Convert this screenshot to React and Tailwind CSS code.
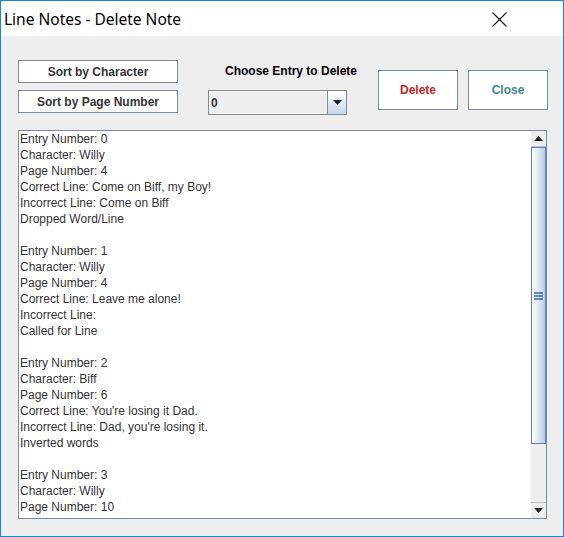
const entries = [
  ["Entry Number: 0", "Character: Willy", "Page Number: 4", "Correct Line: Come on Biff, my Boy!", "Incorrect Line: Come on Biff", "Dropped Word/Line"],
  ["Entry Number: 1", "Character: Willy", "Page Number: 4", "Correct Line: Leave me alone!", "Incorrect Line:", "Called for Line"],
  ["Entry Number: 2", "Character: Biff", "Page Number: 6", "Correct Line: You're losing it Dad.", "Incorrect Line: Dad, you're losing it.", "Inverted words"],
  ["Entry Number: 3", "Character: Willy", "Page Number: 10"],
];

const lines = entries.flatMap((e, i) => (i === 0 ? e : ["", ...e]));

const Arrow = ({ up }) => (
  <svg width="9" height="5" viewBox="0 0 9 5">
    <path d={up ? "M0 5 L4.5 0 L9 5 Z" : "M0 0 L9 0 L4.5 5 Z"} fill="#222" />
  </svg>
);

const App = () => {
  return (
    <div
      className="w-[564px] h-[537px] border border-[#1883d7] bg-[#eeeeee] flex flex-col overflow-hidden"
      style={{ fontFamily: '"Liberation Sans", Arial, sans-serif' }}
    >
      {/* title bar */}
      <div className="h-[35px] bg-white flex items-center justify-between shrink-0">
        <span
          className="pl-[3px] pt-[2px] text-[15.5px] text-black leading-none"
          style={{ fontFamily: '"Noto Sans", "Open Sans", sans-serif' }}
        >
          Line Notes - Delete Note
        </span>
        <svg width="15" height="15" viewBox="0 0 15 15" className="mr-[56px] mt-[2px]">
          <path d="M0.5 0.5 L14.5 14.5 M14.5 0.5 L0.5 14.5" stroke="#111" strokeWidth="1.1" />
        </svg>
      </div>

      <div className="flex flex-col px-[17px] pt-[24px]">
        {/* controls row */}
        <div className="flex items-start h-[70px]">
          <div className="w-[160px] shrink-0 flex flex-col gap-[7px]">
            <button className="h-[23px] bg-white border border-[#7a8a99] text-[12px] font-bold text-[#333333]">
              Sort by Character
            </button>
            <button className="h-[23px] bg-white border border-[#7a8a99] text-[12px] font-bold text-[#333333]">
              Sort by Page Number
            </button>
          </div>

          <div className="ml-[30px] w-[139px] shrink-0 flex flex-col">
            <div className="ml-[17px] h-[20px] mt-[1px] whitespace-nowrap text-[12px] font-bold text-black leading-[20px]">
              Choose Entry to Delete
            </div>
            <div className="mt-[9px] h-[25px] flex border border-[#7a8a99]">
              <div className="flex-1 border border-[#f8f8f8] bg-[#eeeeee] flex items-center pl-[1px] text-[12px] font-bold text-[#333333]">
                0
              </div>
              <div className="w-[19px] border-l border-[#7a8a99] bg-gradient-to-b from-white to-[#c9d6e8] flex items-center justify-center">
                <Arrow />
              </div>
            </div>
          </div>

          <div className="ml-[31px] mt-[10px] shrink-0 flex gap-[10px]">
            <button className="w-[80px] h-[40px] bg-white border border-[#7a8a99] text-[12px] font-bold text-[#c0282e]">
              Delete
            </button>
            <button className="w-[80px] h-[40px] bg-white border border-[#7a8a99] text-[12px] font-bold text-[#3c8a8c]">
              Close
            </button>
          </div>
        </div>

        {/* text area */}
        <div className="w-[529px] h-[389px] border border-[#7a8a99] bg-white flex overflow-hidden">
          <div className="flex-1 pl-[1px] overflow-hidden text-[12px] leading-[16px] text-[#333333]">
            {lines.map((l, i) => (
              <div key={i} className="h-[16px] whitespace-pre">
                {l}
              </div>
            ))}
          </div>
          <div className="w-[15px] shrink-0 bg-[#eeeeee] flex flex-col">
            <div className="h-[16px] bg-[#eeeeee] border-b border-[#b8c0cc] flex items-center justify-center">
              <Arrow up />
            </div>
            <div className="h-[297px] border border-[#6382bf] bg-gradient-to-r from-white via-[#dce6f4] to-[#b8cbe6] flex items-center justify-center">
              <div className="flex flex-col gap-[1px]">
                <div className="w-[9px] h-[2px] bg-[#6382bf]" />
                <div className="w-[9px] h-[2px] bg-[#6382bf]" />
                <div className="w-[9px] h-[2px] bg-[#6382bf]" />
              </div>
            </div>
            <div className="flex-1" />
            <div className="h-[16px] bg-[#eeeeee] border-t border-[#b8c0cc] flex items-center justify-center">
              <Arrow />
            </div>
          </div>
        </div>
      </div>
    </div>
  );
};

export default App;
